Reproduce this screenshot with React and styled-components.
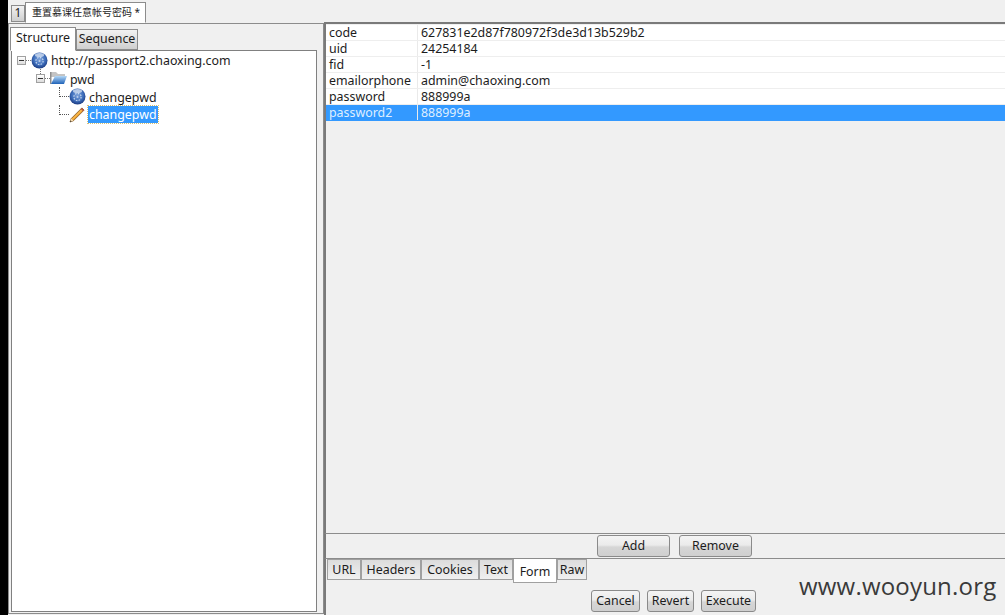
import styled, { createGlobalStyle } from "styled-components";

const GlobalStyle = createGlobalStyle`
  html, body {
    margin: 0;
    padding: 0;
    background: #f0f0f0;
  }
  body {
    font-family: "Noto Sans", "Noto Sans CJK SC", sans-serif;
    font-size: 12.4px;
    color: #1c1c1c;
  }
`;

const Screen = styled.div`
  position: relative;
  width: 1005px;
  height: 615px;
  box-sizing: border-box;
  border-left: 8px solid #000;
  background: #f0f0f0;
  overflow: hidden;
  display: flex;
  flex-direction: column;
`;

const TopTabs = styled.div`
  display: flex;
  align-items: flex-end;
  height: 23px;
  padding-left: 3px;
  flex: none;
`;

const tabFill = (active) =>
  active ? "#fff" : "linear-gradient(#f2f2f2, #cfcfcf)";

const TopTab = styled.div`
  box-sizing: border-box;
  height: ${(p) => (p.$active ? "21px" : "17px")};
  width: ${(p) => (p.$active ? "121px" : "14px")};
  padding-left: ${(p) => (p.$active ? "6px" : "0")};
  margin-bottom: ${(p) => (p.$active ? "0" : "1px")};
  text-align: ${(p) => (p.$active ? "left" : "center")};
  background: ${(p) => tabFill(p.$active)};
  border: 1px solid #8c8c8c;
  border-bottom: ${(p) => (p.$active ? "1px solid #fff" : "1px solid #8c8c8c")};
  font-size: ${(p) => (p.$active ? "10px" : "12px")};
  line-height: ${(p) => (p.$active ? "19px" : "13px")};
  white-space: nowrap;
`;

const Body = styled.div`
  flex: 1;
  display: flex;
  min-height: 0;
`;

const LeftPane = styled.div`
  box-sizing: border-box;
  width: 316px;
  height: 591px;
  border: 1px solid #8c8c8c;
  display: flex;
  flex-direction: column;
  padding: 2px 6px 1px 1px;
`;

const InnerTabs = styled.div`
  display: flex;
  align-items: flex-end;
  height: 24px;
  flex: none;
`;

const InnerTab = styled.div`
  box-sizing: border-box;
  height: ${(p) => (p.$active ? "24px" : "21px")};
  margin-bottom: ${(p) => (p.$active ? "-1px" : "0")};
  width: ${(p) => p.$width}px;
  text-align: center;
  background: ${(p) => tabFill(p.$active)};
  border: 1px solid #8c8c8c;
  border-bottom-color: ${(p) => (p.$active ? "#fff" : "#8c8c8c")};
  line-height: ${(p) => (p.$active ? "20px" : "18px")};
  position: relative;
  z-index: ${(p) => (p.$active ? 1 : 0)};
`;

const TreeBox = styled.div`
  flex: 1;
  margin-left: 1px;
  box-sizing: border-box;
  background: #fff;
  border: 1px solid #808080;
`;

const TreeRow = styled.div`
  display: flex;
  align-items: center;
  height: 18px;
  padding-left: ${(p) => p.$indent}px;
`;

const Expander = styled.span`
  position: relative;
  flex: none;
  box-sizing: border-box;
  width: 9px;
  height: 9px;
  margin-right: 5px;
  border: 1px solid #a0a0a0;
  background: linear-gradient(#fff, #dcdcdc);
  &::before {
    content: "";
    position: absolute;
    left: 1px;
    top: 3px;
    width: 5px;
    height: 1px;
    background: #333;
  }
  &::after {
    content: "";
    position: absolute;
    left: 8px;
    top: 3px;
    width: 5px;
    border-top: 1px dotted #777;
  }
`;

const ExpanderStem = styled.span`
  position: absolute;
  left: 3px;
  top: -6px;
  height: 5px;
  border-left: 1px dotted #777;
`;

const Elbow = styled.span`
  flex: none;
  align-self: flex-start;
  box-sizing: border-box;
  width: 10px;
  height: 10px;
  border-left: 1px dotted #555;
  border-bottom: 1px dotted #555;
`;

const NodeLabel = styled.span`
  box-sizing: border-box;
  margin-left: ${(p) => (p.$selected ? "2px" : "3px")};
  padding: ${(p) => (p.$root || p.$selected ? "0" : "2px")} ${(p) => (p.$selected ? "1px" : "0")} 0;
  height: ${(p) => (p.$selected ? "17px" : "auto")};
  line-height: ${(p) => (p.$selected ? "18px" : "normal")};
  background: ${(p) => (p.$selected ? "#3399ff" : "transparent")};
  color: ${(p) => (p.$selected ? "#fff" : "#1c1c1c")};
  outline: ${(p) => (p.$selected ? "1px dotted #d8c070" : "none")};
  white-space: nowrap;
`;

const RightPane = styled.div`
  flex: 1;
  display: flex;
  flex-direction: column;
  min-width: 0;
`;

const TableArea = styled.div`
  box-sizing: border-box;
  height: 512px;
  margin-top: -1px;
  padding-top: 1px;
  border-top: 2px solid #7a7a7a;
  border-left: 2px solid #7a7a7a;
  border-bottom: 1px solid #8c8c8c;
  flex: none;
`;

const ParamRow = styled.div`
  display: grid;
  grid-template-columns: 91px 1fr;
  height: 16px;
  box-sizing: border-box;
  background: ${(p) => (p.$selected ? "#3399ff" : "#fff")};
  color: ${(p) => (p.$selected ? "#dfeeff" : "#1c1c1c")};
  border-bottom: 1px solid ${(p) => (p.$selected ? "#3399ff" : "#eeeeee")};
  line-height: 15px;
`;

const ParamCell = styled.div`
  padding-left: 3px;
  border-left: ${(p) => (p.$value ? "1px solid #eaeaea" : "none")};
  white-space: nowrap;
`;

const AddRow = styled.div`
  display: flex;
  justify-content: flex-end;
  gap: 9px;
  height: 25px;
  box-sizing: border-box;
  padding: 1px 253px 0 0;
  flex: none;
  border-left: 2px solid #7a7a7a;
  border-bottom: 1px solid #8c8c8c;
`;

const PushButton = styled.button`
  box-sizing: border-box;
  width: ${(p) => p.$width}px;
  height: 22px;
  padding: 0 0 2px;
  font: inherit;
  color: #1c1c1c;
  border: 1px solid #8a8a8a;
  border-radius: 3px;
  background: linear-gradient(#f4f4f4 0%, #ebebeb 45%, #d6d6d6 55%, #cfcfcf 100%);
`;

const EditorArea = styled.div`
  flex: 1;
  border-left: 2px solid #7a7a7a;
  display: flex;
  flex-direction: column;
`;

const EditorTabs = styled.div`
  display: flex;
  align-items: flex-start;
  padding-left: 1px;
  height: 31px;
  flex: none;
`;

const EditorTab = styled.div`
  box-sizing: border-box;
  height: ${(p) => (p.$active ? "24px" : "21px")};
  width: ${(p) => p.$width}px;
  text-align: center;
  background: ${(p) => (p.$active ? "#fff" : "linear-gradient(#dcdcdc, #f0f0f0)")};
  border: 1px solid #a0a0a0;
  border-top: ${(p) => (p.$active ? "none" : "1px solid #a0a0a0")};
  line-height: ${(p) => (p.$active ? "25px" : "19px")};
`;

const ActionRow = styled.div`
  display: flex;
  gap: 7px;
  padding-left: 265px;
`;

const Watermark = styled.div`
  position: absolute;
  left: 791px;
  top: 569px;
  font-family: "Open Sans", sans-serif;
  font-size: 24px;
  letter-spacing: 0.2px;
  line-height: 33px;
  color: #3a3a3a;
  white-space: nowrap;
`;

const Globe = ({ id }) => (
  <svg width="17" height="17" viewBox="0 0 17 17" style={{ flex: "none" }}>
    <defs>
      <radialGradient id={id} cx="0.5" cy="0.42" r="0.6">
        <stop offset="0" stopColor="#7fa3da" />
        <stop offset="0.6" stopColor="#3f6fbc" />
        <stop offset="1" stopColor="#16357c" />
      </radialGradient>
    </defs>
    <circle cx="8.5" cy="8.5" r="8" fill={`url(#${id})`} />
    <ellipse cx="8.5" cy="3" rx="4.6" ry="2" fill="#e4ecf8" opacity="0.7" />
    <circle cx="8.5" cy="9" r="3.6" fill="none" stroke="#dbe6f6" strokeWidth="1.2" strokeDasharray="1.6 1.2" opacity="0.85" />
    <circle cx="8.5" cy="9" r="1" fill="#dbe6f6" opacity="0.7" />
  </svg>
);

const Folder = () => (
  <svg width="17" height="14" viewBox="0 0 17 14" style={{ flex: "none" }}>
    <defs>
      <linearGradient id="folderFill" x1="0" y1="0" x2="0" y2="1">
        <stop offset="0" stopColor="#b4d8f6" />
        <stop offset="1" stopColor="#1f62b8" />
      </linearGradient>
    </defs>
    <path d="M0 1h6l2 2h7v3H0z" fill="#c4c4c4" />
    <path d="M0 1h1.5v12H0z" fill="#8f8f8f" />
    <path d="M5 5h12l-3 8H1z" fill="url(#folderFill)" />
  </svg>
);

const Pencil = () => (
  <svg width="17" height="17" viewBox="0 0 17 17" style={{ flex: "none" }}>
    <path d="M1 16l1.2-3.4L12.9 1.9l2.2 2.2L4.4 14.8z" fill="#f0a22c" stroke="#6e4412" strokeWidth="0.7" />
    <path d="M3.4 13.2L13.4 3.2" stroke="#ffd680" strokeWidth="0.7" />
    <path d="M1 16l1.2-3.4 2.2 2.2z" fill="#f6dfb8" />
    <path d="M1 16l.5-1.6 1.1 1.1z" fill="#222" />
    <path d="M12.9 1.9l2.2 2.2-1.2 1.2-2.2-2.2z" fill="#b9574a" />
  </svg>
);

const params = [
  ["code", "627831e2d87f780972f3de3d13b529b2"],
  ["uid", "24254184"],
  ["fid", "-1"],
  ["emailorphone", "admin@chaoxing.com"],
  ["password", "888999a"],
  ["password2", "888999a"],
];

const editorTabs = [
  ["URL", 34],
  ["Headers", 60],
  ["Cookies", 58],
  ["Text", 34],
  ["Form", 44],
  ["Raw", 30],
];

export default function App() {
  return (
    <Screen>
      <GlobalStyle />
      <TopTabs>
        <TopTab>1</TopTab>
        <TopTab $active>重置慕课任意帐号密码 *</TopTab>
      </TopTabs>
      <Body>
        <LeftPane>
          <InnerTabs>
            <InnerTab $active $width={66}>Structure</InnerTab>
            <InnerTab $width={62}>Sequence</InnerTab>
          </InnerTabs>
          <TreeBox>
            <TreeRow $indent={5}>
              <Expander />
              <Globe id="globeRoot" />
              <NodeLabel $root>http://passport2.chaoxing.com</NodeLabel>
            </TreeRow>
            <TreeRow $indent={24}>
              <Expander>
                <ExpanderStem />
              </Expander>
              <Folder />
              <NodeLabel>pwd</NodeLabel>
            </TreeRow>
            <TreeRow $indent={47}>
              <Elbow />
              <Globe id="globeLeaf" />
              <NodeLabel>changepwd</NodeLabel>
            </TreeRow>
            <TreeRow $indent={47}>
              <Elbow />
              <Pencil />
              <NodeLabel $selected>changepwd</NodeLabel>
            </TreeRow>
          </TreeBox>
        </LeftPane>
        <RightPane>
          <TableArea>
            {params.map(([name, value], i) => (
              <ParamRow key={name} $selected={i === params.length - 1}>
                <ParamCell>{name}</ParamCell>
                <ParamCell $value>{value}</ParamCell>
              </ParamRow>
            ))}
          </TableArea>
          <AddRow>
            <PushButton $width={73}>Add</PushButton>
            <PushButton $width={73}>Remove</PushButton>
          </AddRow>
          <EditorArea>
            <EditorTabs>
              {editorTabs.map(([label, width]) => (
                <EditorTab key={label} $width={width} $active={label === "Form"}>
                  {label}
                </EditorTab>
              ))}
            </EditorTabs>
            <ActionRow>
              <PushButton $width={49}>Cancel</PushButton>
              <PushButton $width={47}>Revert</PushButton>
              <PushButton $width={55}>Execute</PushButton>
            </ActionRow>
          </EditorArea>
        </RightPane>
      </Body>
      <Watermark>www.wooyun.org</Watermark>
    </Screen>
  );
}
